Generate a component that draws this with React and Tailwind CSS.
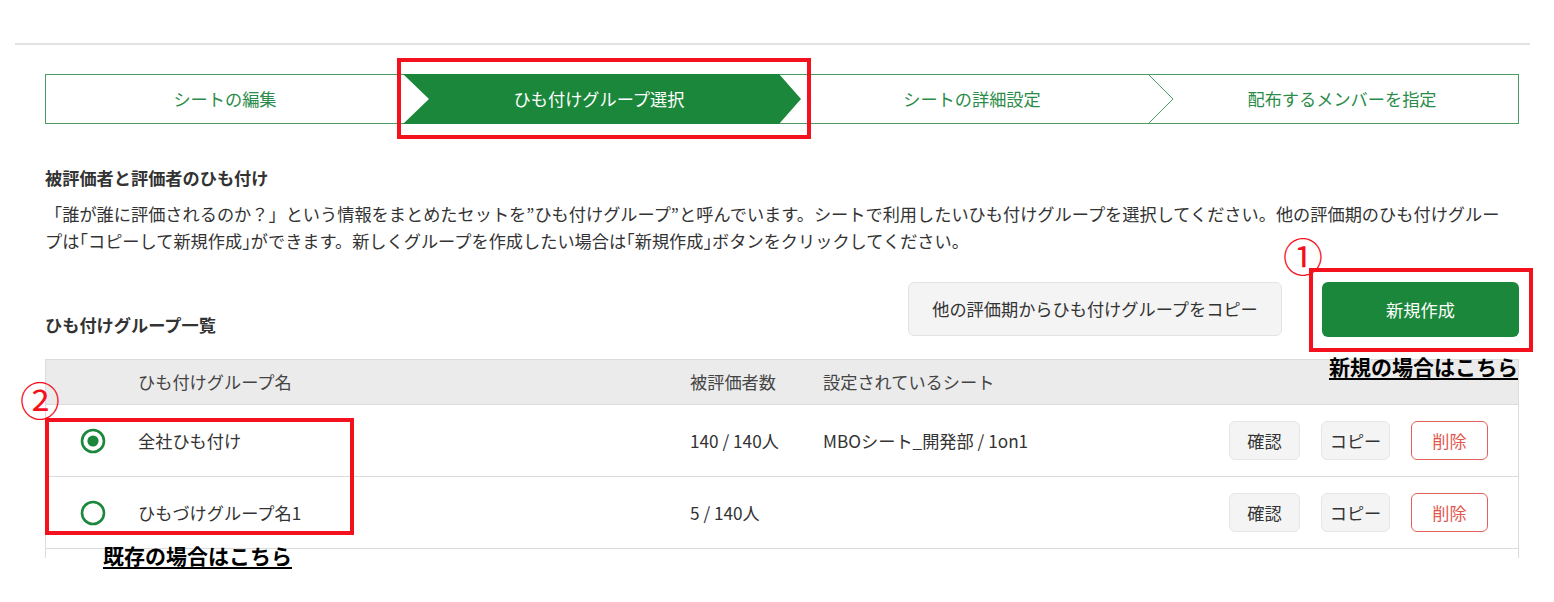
const GREEN = "#1b873b";

const groups = [
  { id: 1, name: "全社ひも付け", count: "140 / 140人", sheet: "MBOシート_開発部 / 1on1", checked: true },
  { id: 2, name: "ひもづけグループ名1", count: "5 / 140人", sheet: "", checked: false },
];

function Radio({ checked }) {
  return (
    <svg width="26" height="26" viewBox="0 0 26 26">
      <circle cx="13" cy="13" r="11" fill="white" stroke={GREEN} strokeWidth="2.6" />
      {checked && <circle cx="13" cy="13" r="5.6" fill={GREEN} />}
    </svg>
  );
}

// 約物を半角幅にする
const H = ({ children }) => <span className="[font-feature-settings:'halt']">{children}</span>;

function Stepper() {
  return (
    <div className="relative h-[50px] w-[1474px] border border-[#4a9d63]">
      {/* 矢印の描画 */}
      <svg className="absolute -left-px -top-px" width="1474" height="50" viewBox="0 0 1474 50">
        <polygon points="358,0 734,0 756,25 734,50 358,50 384,25" fill={GREEN} />
        <polyline points="1103,0 1128,25 1103,50" fill="none" stroke="#4a9d63" strokeWidth="1" />
      </svg>
      <div className="relative grid h-full grid-cols-[358px_390px_356px_1fr] items-center text-center text-[17.2px] leading-6">
        <span className="text-[#2b8c49]">シートの編集</span>
        <span className="text-white">ひも付けグループ選択</span>
        <span className="text-[#2b8c49]">シートの詳細設定</span>
        <span className="pl-4 text-[#2b8c49]">配布するメンバーを指定</span>
      </div>
    </div>
  );
}

export default function App() {
  return (
    <div className="relative h-[602px] overflow-hidden bg-white pt-[43px] font-['Noto_Sans_CJK_JP',sans-serif] text-[17.2px] text-[#333]">
      <div className="ml-[15px] w-[1515px] border-t-2 border-[#e2e2e2]">
        <div className="ml-[30px] w-[1474px] pt-[29px]">
          <Stepper />

          <h2 className="mt-[42px] text-[17.2px] font-bold leading-6 text-[#333]">被評価者と評価者のひも付け</h2>
          <p className="mt-[10px] whitespace-nowrap leading-[27px]">
            「誰が誰に評価されるのか？」という情報をまとめたセットを”ひも付けグループ”と呼んでいます。シートで利用したいひも付けグループを選択してください。他の評価期のひも付けグルー
            <br />
            プは<H>「</H>コピーして新規作成<H>」</H>ができます。新しくグループを作成したい場合は<H>「</H>新規作成<H>」</H>ボタンをクリックしてください。
          </p>

          <div className="mt-[28px] flex items-end justify-between">
            <h2 className="font-bold leading-6">ひも付けグループ一覧</h2>
            <div className="flex gap-[40px]">
              <button className="h-[54px] w-[374px] rounded-md border border-[#e3e3e3] bg-[#f4f4f4] text-[#333]">
                他の評価期からひも付けグループをコピー
              </button>
              <button className="h-[55px] w-[197px] rounded-md bg-[#1b873b] text-white">新規作成</button>
            </div>
          </div>

          {/* 一覧テーブル */}
          <div className="mt-[22px] border-x border-t border-[#dcdcdc]">
            <div className="grid h-[44px] grid-cols-[92px_552px_133px_1fr] items-center bg-[#ebebeb] text-[#444]">
              <span />
              <span>ひも付けグループ名</span>
              <span>被評価者数</span>
              <span>設定されているシート</span>
            </div>
            {groups.map((g) => (
              <div
                key={g.id}
                className="grid h-[72px] grid-cols-[92px_552px_133px_1fr_auto] items-center border-t border-[#dcdcdc] pr-[30px]"
              >
                <span className="flex justify-center pl-px">
                  <Radio checked={g.checked} />
                </span>
                <span>{g.name}</span>
                <span>{g.count}</span>
                <span>{g.sheet}</span>
                <div className="flex gap-[21px]">
                  <button className="h-[39px] w-[71px] rounded-md border border-[#e6e6e6] bg-[#f4f4f4]">確認</button>
                  <button className="h-[39px] w-[69px] rounded-md border border-[#e6e6e6] bg-[#f4f4f4]">コピー</button>
                  <button className="h-[39px] w-[77px] rounded-md border border-[#e4605a] bg-white text-[#e4574f]">削除</button>
                </div>
              </div>
            ))}
            <div className="h-[10px] border-t border-[#dcdcdc]" />
          </div>
        </div>
      </div>

      {/* 注釈 */}
      <div className="absolute left-[397px] top-[58px] h-[81px] w-[414px] border-4 border-[#f4111e]" />
      <div className="absolute left-[1309px] top-[268px] h-[84px] w-[224px] border-4 border-[#f4111e]" />
      <div className="absolute left-[45px] top-[418px] h-[117px] w-[309px] border-4 border-[#f4111e]" />

      <span className="absolute left-[1283px] top-[233px] text-[40px] leading-[44px] text-[#f4111e]">①</span>
      <span className="absolute left-[20px] top-[377px] text-[40px] leading-[44px] text-[#f4111e]">②</span>

      <span className="absolute left-[1329px] top-[352px] text-[21px] font-bold leading-[28px] text-black underline decoration-2 underline-offset-[3px]">
        新規の場合はこちら
      </span>
      <span className="absolute left-[103px] top-[541px] text-[21px] font-bold leading-[28px] text-black underline decoration-2 underline-offset-[3px]">
        既存の場合はこちら
      </span>
    </div>
  );
}
